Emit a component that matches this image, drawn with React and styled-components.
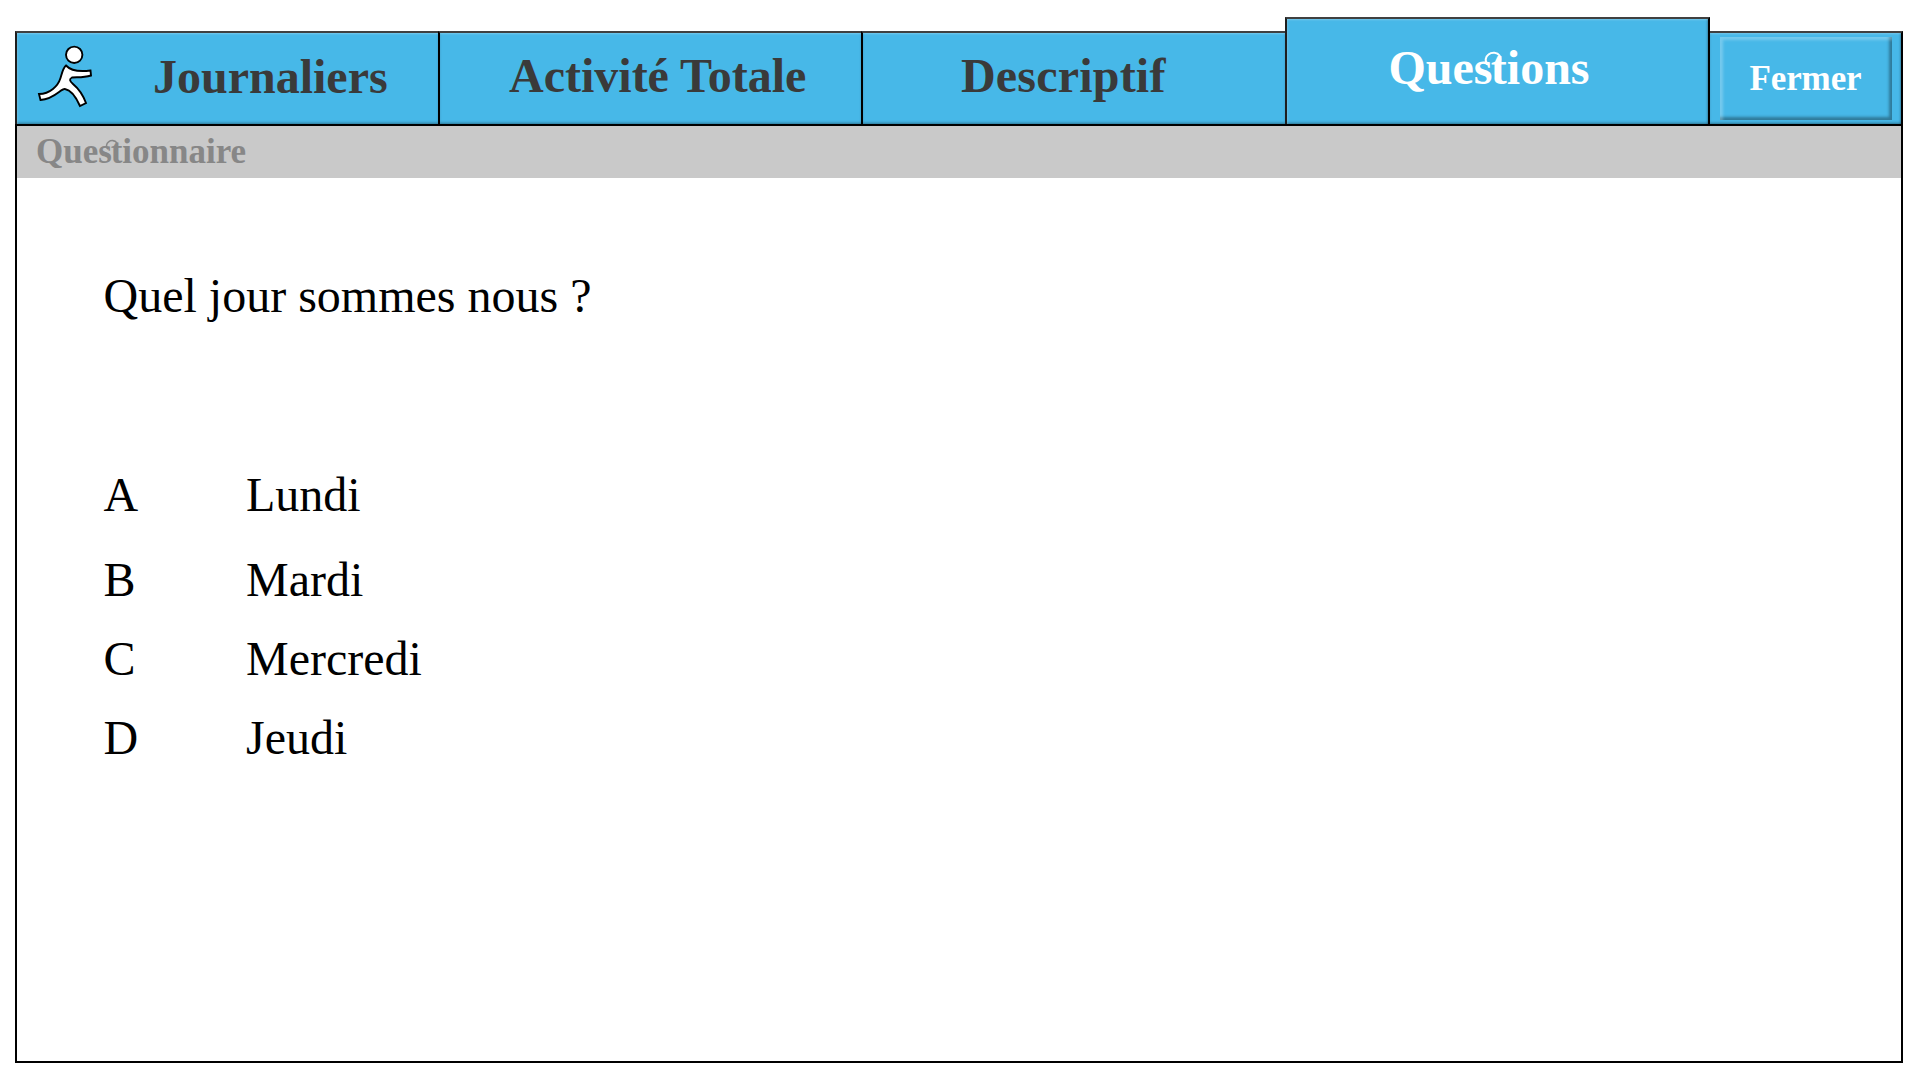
import React from "react";
import styled, { createGlobalStyle } from "styled-components";

const Global = createGlobalStyle`
  * { box-sizing: border-box; }
  body {
    margin: 0;
    background: #fff;
    font-family: "Liberation Serif", "Times New Roman", serif;
  }
`;

const Page = styled.div`
  width: 1920px;
  height: 1080px;
  padding: 17px 17px 17px 15px;
  display: flex;
  flex-direction: column;
`;

const TabBar = styled.nav`
  display: flex;
  align-items: flex-end;
  height: 107px;
  flex: none;
`;

const Tab = styled.div`
  display: flex;
  align-items: flex-start;
  flex: none;
  width: ${(p) => p.$width}px;
  height: ${(p) => (p.$active ? 107 : 93)}px;
  padding: ${(p) => p.$top}px 0 0 ${(p) => p.$left}px;
  background: #47b8e8;
  border-left: 2px solid ${(p) => (p.$lit ? "#1e1e1e" : "#000")};
  border-right: ${(p) => (p.$active ? 2 : 0)}px solid #000;
  border-top: 2px solid #404040;
  box-shadow: inset 0 2px 2px -1px rgba(255, 255, 255, 0.25),
    inset ${(p) => (p.$lit ? 2 : 0)}px 0 2px -1px rgba(255, 255, 255, ${(p) => (p.$lit ? 0.22 : 0)}),
    inset ${(p) => (p.$active ? -2 : 0)}px 0 2px -1px rgba(0, 0, 0, ${(p) => (p.$active ? 0.22 : 0)}),
    inset 0 -2px 3px -1px rgba(0, 0, 0, 0.38);
  color: ${(p) => (p.$active ? "#fff" : "#3a3a3a")};
  font-size: 48px;
  line-height: 54px;
  letter-spacing: ${(p) => p.$spacing || 0}px;
  font-weight: bold;
  white-space: nowrap;
`;

const Runner = styled.svg`
  width: 56px;
  height: 64px;
  flex: none;
  margin: -6px 60px 0 0;
`;

const CloseArea = styled.div`
  width: 193px;
  height: 93px;
  flex: none;
  padding: 4px 9px 4px 10px;
  background: #47b8e8;
  border-top: 2px solid #404040;
  border-right: 2px solid #000;
  box-shadow: inset 0 2px 2px -1px rgba(255, 255, 255, 0.25),
    inset -2px 0 2px -1px rgba(0, 0, 0, 0.22),
    inset 0 -2px 3px -1px rgba(0, 0, 0, 0.38);
`;

const CloseButton = styled.button`
  display: block;
  width: 172px;
  height: 83px;
  padding: 0 1px 0 0;
  border: 0;
  background: #47b8e8;
  box-shadow: inset 4px 4px 3px -1px rgba(255, 255, 255, 0.26),
    inset -4px -4px 3px -1px rgba(0, 0, 0, 0.34);
  color: #fff;
  font: bold 35px/40px "Liberation Serif", "Times New Roman", serif;
  letter-spacing: -0.1px;
`;

const Panel = styled.main`
  flex: none;
  width: 1888px;
  height: 939px;
  border: 2px solid #000;
`;

const Heading = styled.h1`
  margin: 0;
  height: 52px;
  padding: 6px 0 0 19px;
  background: #c9c9c9;
  color: #878787;
  font-size: 35px;
  line-height: 40px;
  font-weight: bold;
`;

const Ligature = styled.span`
  position: relative;
`;

const TightS = styled.span`
  letter-spacing: -0.035em;
`;

const Swash = styled.svg`
  position: absolute;
  left: 0;
  top: 0;
  width: 1em;
  height: 1em;
  fill: none;
  stroke: currentColor;
  stroke-width: 2.1;
  stroke-linecap: round;
`;

const Quiz = styled.section`
  padding: 91px 0 0 86.5px;
  font-size: 48px;
  line-height: 54px;
  color: #000;
`;

const Prompt = styled.p`
  margin: 0 0 145px;
`;

const Answers = styled.div`
  display: flex;
  flex-direction: column;
  gap: 25px;
`;

const Answer = styled.div`
  display: grid;
  grid-template-columns: 142.5px auto;
  margin-bottom: ${(p) => p.$extra || 0}px;
`;

const answers = [
  ["A", "Lundi", 6],
  ["B", "Mardi"],
  ["C", "Mercredi"],
  ["D", "Jeudi"],
];

// The "st" pair, joined by a fine loop from the s to the t.
const St = () => (
  <Ligature>
    <TightS>s</TightS>t
    <Swash viewBox="0 0 48 48" aria-hidden="true">
      <path d="M13.200 23C10.800 20.500 11.200 15.800 14.500 13.500C17.700 11 23.400 11.200 25.500 14.500C27 17 26.500 20.500 25.300 24" />
    </Swash>
  </Ligature>
);

export default function App() {
  return (
    <Page>
      <Global />
      <TabBar>
        <Tab $width={423} $top={17} $left={20} $lit>
          <Runner viewBox="37 44 56 64">
            <g fill="#fff" stroke="#000" strokeWidth="1.9">
              <circle cx="74.2" cy="54.8" r="8.2" />
              <path d="M66 65.5C71 71 79 72 90.500 70.500L91 75.500C83 78 77 77 72 77.500C69 79 69.500 81 73 84C79 89 83 95 86 103L80 106C76 97 71 90 65 89C61 88 55 99 40.500 100L39 94C50 94 58 86 60.500 78C62 73 63 68 66 65.500Z" />
            </g>
          </Runner>
          <span>Journaliers</span>
        </Tab>
        <Tab $width={423} $top={16} $left={69}>
          <span>Activité Totale</span>
        </Tab>
        <Tab $width={424} $top={16} $left={98} $spacing={0.2}>
          <span>Descriptif</span>
        </Tab>
        <Tab $width={425} $top={22} $left={101.5} $active $lit>
          <span>Que<St />ions</span>
        </Tab>
        <CloseArea>
          <CloseButton>Fermer</CloseButton>
        </CloseArea>
      </TabBar>
      <Panel>
        <Heading>Que<St />ionnaire</Heading>
        <Quiz>
          <Prompt>Quel jour sommes nous ?</Prompt>
          <Answers>
            {answers.map(([letter, label, extra]) => (
              <Answer key={letter} $extra={extra}>
                <span>{letter}</span>
                <span>{label}</span>
              </Answer>
            ))}
          </Answers>
        </Quiz>
      </Panel>
    </Page>
  );
}
